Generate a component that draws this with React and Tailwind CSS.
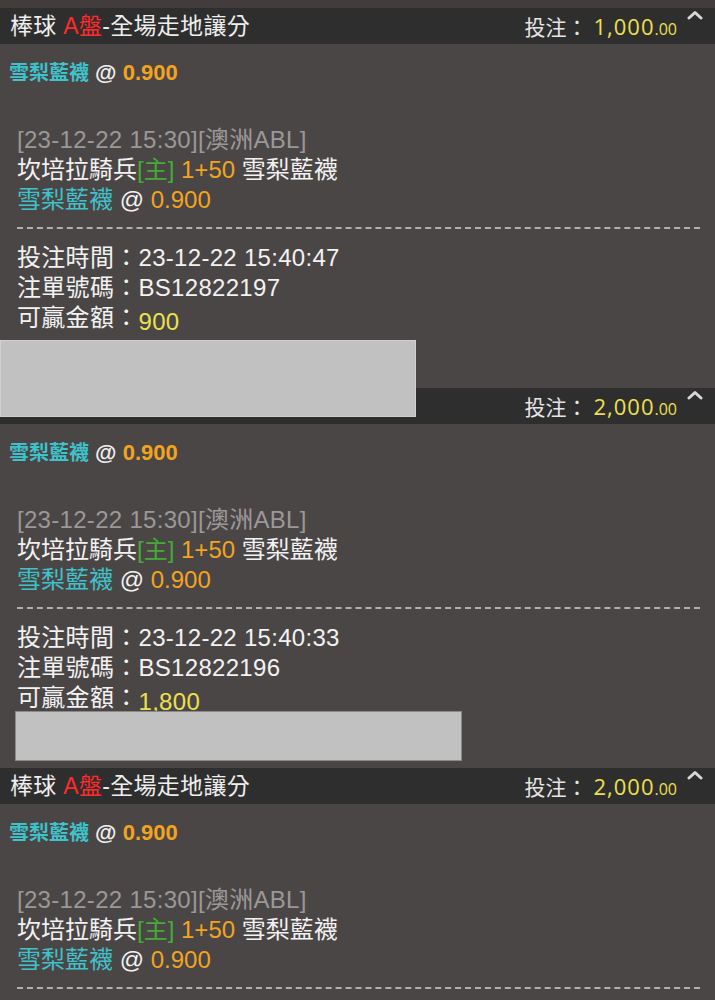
import React from "react";

const FONT = { fontFamily: '"Liberation Sans",Arial,"Noto Sans CJK TC",sans-serif' };

function Caret() {
  return (
    <svg className="absolute right-[12px] top-[2px]" width="16" height="10" viewBox="0 0 16 10">
      <path d="M2 8 L8 2.5 L14 8" fill="none" stroke="#d8d8d8" strokeWidth="3" strokeLinecap="round" strokeLinejoin="round" />
    </svg>
  );
}

function Header({ amount, showTitle }) {
  return (
    <div className="relative h-9 bg-[#2f2e2e] flex items-center justify-between pl-[10px] pr-[38px]">
      <div className="text-[23px] text-[#eeeeee] leading-none tracking-[0.3px]">
        {showTitle ? (
          <>
            棒球 <span className="text-[#ff2a2a]">A盤</span>-全場走地讓分
          </>
        ) : null}
      </div>
      <div className="flex items-baseline leading-none">
        <span className="text-[21px] text-[#e6e6e6]">投注：</span>
        <span className="ml-[6px] text-[22px] tracking-[1px] text-[#ede04e]" style={{ fontFamily: '"Open Sans",sans-serif' }}>
          {amount}
          <span className="text-[16px] tracking-normal">.00</span>
        </span>
      </div>
      <Caret />
    </div>
  );
}

function Section({ amount, showTitle, time, id, win, cut }) {
  return (
    <div className="flex flex-col">
      <Header amount={amount} showTitle={showTitle} />
      <div className="mt-[14px] pl-[9px] h-[30px] leading-[30px] text-[20px] font-bold">
        <span className="text-[#3ec2cb]">雪梨藍襪</span>
        <span className="text-[#f0f0f0] text-[22px]"> @ </span>
        <span className="text-[#f2a41f] text-[22px]">0.900</span>
      </div>
      <div className="mt-[37px] pl-[17px] text-[24px] leading-[30px] tracking-[0.3px]">
        <div className="text-[#9b9898] h-[30px]">[23-12-22 15:30][澳洲ABL]</div>
        <div className="text-[#f2f2f2] h-[30px] tracking-normal">
          坎培拉騎兵<span className="text-[#45ab35]">[主]</span>{" "}
          <span className="text-[#f2a41f]">1+50</span> 雪梨藍襪
        </div>
        <div className="h-[30px] tracking-normal">
          <span className="text-[#3ec2cb]">雪梨藍襪</span>
          <span className="text-[#f2f2f2]"> @ </span>
          <span className="text-[#f2a41f]">0.900</span>
        </div>
      </div>
      <div className="mt-[12px] ml-[17px] mr-[15px] border-t-2 border-dashed border-[#b0b0b0] h-0" />
      {cut ? null : (
        <div className="mt-[14px] pl-[17px] text-[24px] leading-[30px] tracking-[0.3px] text-[#f2f2f2] mb-[55px]">
          <div className="h-[30px]">投注時間：23-12-22 15:40:{time}</div>
          <div className="h-[30px]">注單號碼：{id}</div>
          <div className="h-[30px]">
            可贏金額：<span className="inline-block translate-y-[4px] text-[#ede04e]">{win}</span>
          </div>
        </div>
      )}
    </div>
  );
}

export default function App() {
  return (
    <div className="relative w-[715px] h-[1000px] overflow-hidden bg-[#4b4646]" style={FONT}>
      <div className="h-[8px] bg-[#423c3c]" />
      <Section amount="1,000" showTitle time="47" id="BS12822197" win="900" />
      <Section amount="2,000" showTitle={false} time="33" id="BS12822196" win="1,800" />
      <Section amount="2,000" showTitle cut />
      <div className="absolute left-0 top-[340px] w-[416px] h-[77px] bg-[#c1c1c1] border border-[#d0d0d0]" />
      <div className="absolute left-[15px] top-[711px] w-[447px] h-[50px] bg-[#c1c1c1] border border-[#8a8a8a]" />
    </div>
  );
}
